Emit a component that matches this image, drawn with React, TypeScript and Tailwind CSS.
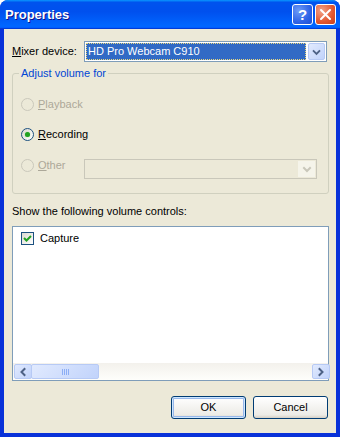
import { ReactNode } from "react";

const Chevron = ({ dir = "down", color = "#4d6185" }: { dir?: "down" | "left" | "right"; color?: string }) => {
  const d =
    dir === "down" ? "M5 7 L8 10 L11 7" : dir === "left" ? "M9.5 5 L6.5 8 L9.5 11" : "M6.5 5 L9.5 8 L6.5 11";
  return (
    <svg width="16" height="16" viewBox="0 0 16 16">
      <path d={d} fill="none" stroke={color} strokeWidth="2" strokeLinecap="square" />
    </svg>
  );
};

const Radio = ({ checked, disabled }: { checked?: boolean; disabled?: boolean }) => (
  <span
    className={
      disabled
        ? "flex h-[13px] w-[13px] shrink-0 items-center justify-center rounded-full border border-[#cac8bb] bg-[#ece9d8]"
        : "flex h-[13px] w-[13px] shrink-0 items-center justify-center rounded-full border border-[#1c5180] bg-[linear-gradient(135deg,#dcd9cf,#ffffff)]"
    }
  >
    {checked && <span className="h-[5px] w-[5px] rounded-full bg-[#21a121] shadow-[0_0_1px_#6fd06f]" />}
  </span>
);

const RadioRow = ({ accel, rest, checked, disabled }: { accel: string; rest: string; checked?: boolean; disabled?: boolean }) => (
  <div className="flex h-[13px] items-center">
    <Radio checked={checked} disabled={disabled} />
    <span className={disabled ? "ml-[4px] w-[46px] text-[#aca899]" : "ml-[4px] w-[46px] text-black"}>
      <u>{accel}</u>
      {rest}
    </span>
  </div>
);

const ScrollBtn = ({ dir }: { dir: "left" | "right" }) => (
  <div className="flex h-[17px] w-[17px] shrink-0 p-[1px]">
    <div className="flex flex-1 items-center justify-center rounded-[2px] border border-[#b7caf5] bg-[linear-gradient(135deg,#e1eafe,#c1d3fb)]">
      <Chevron dir={dir} />
    </div>
  </div>
);

const Button = ({ children, focused }: { children: ReactNode; focused?: boolean }) => (
  <button
    className={
      focused
        ? "h-[23px] w-[75px] rounded-[3px] border border-[#003c74] bg-[linear-gradient(180deg,#ffffff,#ecebe6_85%,#d6d0c5)] text-[11px] text-black shadow-[inset_0_0_0_1px_#cee7ff,inset_0_0_0_2px_#98b8ea]"
        : "h-[23px] w-[75px] rounded-[3px] border border-[#003c74] bg-[linear-gradient(180deg,#ffffff,#ecebe6_85%,#d6d0c5)] text-[11px] text-black"
    }
  >
    {children}
  </button>
);

export default function App() {
  return (
    <div className="flex h-[437px] w-[340px] flex-col overflow-hidden rounded-t-[8px] bg-[#0831d9] font-['Liberation_Sans',Arial,sans-serif] text-[11px] leading-[13px]">
      {/* title bar */}
      <div className="flex h-[29px] shrink-0 items-center bg-[linear-gradient(180deg,#0997ff,#0053ee_8%,#0050ee_40%,#0066ff_88%,#0066ff_93%,#005bff_95%,#003dd7_96%,#003dd7)] pl-[5px] pr-[4px]">
        <span className="flex-1 text-[13px] font-bold text-white [text-shadow:1px_1px_#0f1089]">Properties</span>
        <div className="flex h-[21px] w-[21px] items-center justify-center rounded-[3px] border border-white bg-[radial-gradient(circle_at_30%_30%,#6d9bf7,#2f63e6_60%,#1d4fd4)] text-[15px] font-bold text-white">
          ?
        </div>
        <div className="ml-[2px] flex h-[21px] w-[21px] items-center justify-center rounded-[3px] border border-white bg-[radial-gradient(circle_at_30%_30%,#f2a48a,#e2572f_60%,#c7401c)]">
          <svg width="13" height="13" viewBox="0 0 13 13">
            <path d="M2 2 L11 11 M11 2 L2 11" stroke="#fff" strokeWidth="2" strokeLinecap="round" />
          </svg>
        </div>
      </div>

      {/* client */}
      <div className="mx-[4px] mb-[4px] flex flex-1 flex-col bg-[#ece9d8] px-[8px] pt-[12px] text-black">
        <div className="flex h-[21px] items-center">
          <span className="w-[72px]">
            <u>M</u>ixer device:
          </span>
          <div className="flex h-[21px] w-[243px] items-center border border-[#7f9db9] bg-white p-[1px]">
            <div className="flex h-[17px] flex-1 items-center border border-dotted border-[#e9d87c] bg-[#316ac5] pl-[1px] text-white">
              HD Pro Webcam C910
            </div>
            <div className="ml-[2px] flex h-[17px] w-[17px] items-center justify-center rounded-[2px] border border-[#b7caf5] bg-[linear-gradient(135deg,#e1eafe,#c1d3fb)]">
              <Chevron />
            </div>
          </div>
        </div>

        <div className="relative mt-[11px] h-[121px] w-[317px] rounded-[3px] border border-[#d0d0bf] pl-[8px] pt-[24px]">
          <span className="absolute -top-[7px] left-[6px] bg-[#ece9d8] px-[2px] text-[#0046d5]">Adjust volume for</span>
          <RadioRow accel="P" rest="layback" disabled />
          <div className="mt-[17px]">
            <RadioRow accel="R" rest="ecording" checked />
          </div>
          <div className="mt-[18px] flex items-start">
            <RadioRow accel="O" rest="ther" disabled />
            <div className="flex h-[20px] w-[233px] items-center justify-end border border-[#c9c7ba] p-[1px]">
              <div className="flex h-[16px] w-[17px] items-center justify-center bg-[#f5f4ea]">
                <Chevron color="#c9c7ba" />
              </div>
            </div>
          </div>
        </div>

        <div className="mt-[11px] h-[13px]">Show the following volume controls:</div>

        <div className="mt-[8px] flex h-[155px] w-[317px] flex-col border border-[#7f9db9] bg-white">
          <div className="flex-1 pl-[8px] pt-[5px]">
            <div className="flex h-[13px] items-center">
              <span className="flex h-[13px] w-[13px] items-center justify-center border border-[#1c5180] bg-[linear-gradient(135deg,#dcd9cf,#ffffff)]">
                <svg width="11" height="11" viewBox="0 0 11 11">
                  <path d="M2 5 L4.5 7.5 L9 3" fill="none" stroke="#21a121" strokeWidth="2" />
                </svg>
              </span>
              <span className="ml-[6px]">Capture</span>
            </div>
          </div>
          <div className="flex h-[17px] bg-[linear-gradient(180deg,#f3f1ec,#fefefb)]">
            <ScrollBtn dir="left" />
            <div className="flex h-[17px] w-[70px] p-[1px]">
              <div className="flex flex-1 items-center justify-center gap-[1px] rounded-[2px] border border-[#b7caf5] bg-[linear-gradient(135deg,#e1eafe,#c1d3fb)]">
                <span className="h-[6px] w-[1px] bg-[#8caef5]" />
                <span className="h-[6px] w-[1px] bg-[#8caef5]" />
                <span className="h-[6px] w-[1px] bg-[#8caef5]" />
                <span className="h-[6px] w-[1px] bg-[#8caef5]" />
              </div>
            </div>
            <div className="flex-1" />
            <ScrollBtn dir="right" />
          </div>
        </div>

        <div className="mt-[15px] flex justify-end gap-[7px]">
          <Button focused>OK</Button>
          <Button>Cancel</Button>
        </div>
      </div>
    </div>
  );
}
